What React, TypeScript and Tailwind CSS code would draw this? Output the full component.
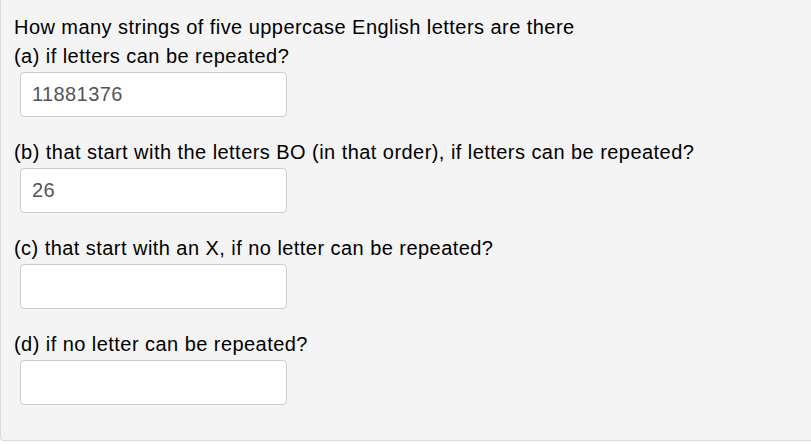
import React from "react";

const parts = [
  { label: "(a) if letters can be repeated?", value: "11881376" },
  {
    label:
      "(b) that start with the letters BO (in that order), if letters can be repeated?",
    value: "26",
  },
  { label: "(c) that start with an X, if no letter can be repeated?", value: "" },
  { label: "(d) if no letter can be repeated?", value: "" },
];

export default function App() {
  return (
    <div className="w-[811px] h-[444px] bg-white font-['Liberation_Sans',Arial,sans-serif]">
      <div className="h-[441px] bg-[#f4f4f4] border-l border-b border-[#dcdcdc] rounded-bl-[4px] pl-[13px] pt-[13px] text-black text-[20px] leading-[29px] tracking-[0.45px]">
        <p>How many strings of five uppercase English letters are there</p>
        {parts.map((p) => (
          <div key={p.label} className="mb-[21px]">
            <p>{p.label}</p>
            <input
              type="text"
              defaultValue={p.value}
              className="mt-px ml-[6px] w-[267px] h-[45px] bg-white border border-[#cccccc] rounded-[4px] px-[11px] text-[20px] text-[#555555] tracking-[0.4px] outline-none"
            />
          </div>
        ))}
      </div>
    </div>
  );
}
